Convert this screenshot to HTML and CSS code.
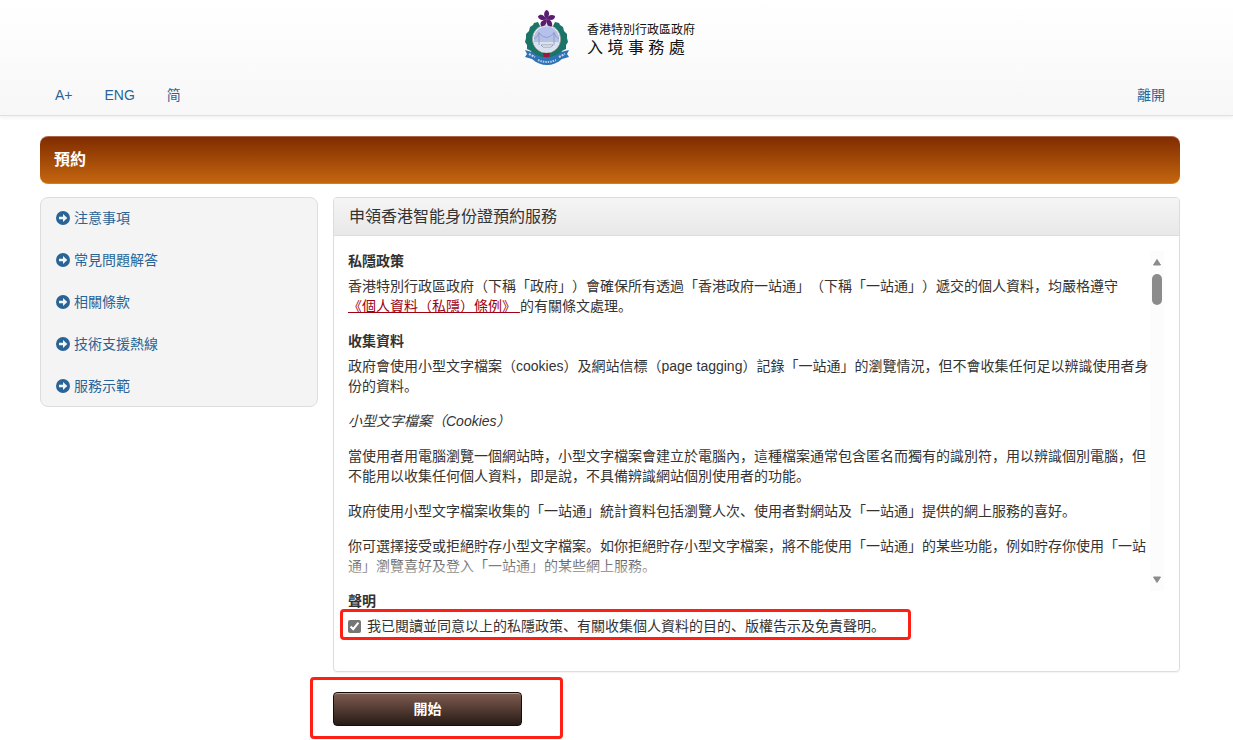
FILE: index.html
```html
<!DOCTYPE html>
<html lang="zh-HK">
<head>
  <meta charset="UTF-8">
  <title>預約 - 入境事務處</title>
  <meta name="viewport" content="width=device-width, initial-scale=1.0">
  <link rel="stylesheet" href="styles.css">
</head>
<body>
  <!-- shapes used more than once -->
  <svg width="0" height="0" class="sprite" aria-hidden="true">
    <symbol id="arrow" viewBox="0 0 14 14">
      <circle cx="7" cy="7" r="7" fill="#2a6496"/>
      <path d="M3 5.7h4V3l4.3 4L7 11V8.3H3z" fill="#f4f4f4"/>
    </symbol>
    <path id="petal" d="M0 0C-3-2-4-6-1-9 3-8 3-4 0 0z"/>
    <path id="leaves" d="M13 12l-4 1-1 2-3 2-1 4-3 3 0 4-1 4 2 3 0 4 4 2 2 4 5 1 4 2 4-1V42C13 42 8.500 36 8.500 29c0-6 3-10 7-12z"/>
  </svg>

  <header class="header">
    <div class="container">
      <div class="logo">
        <svg class="emblem" viewBox="0 0 45 56" aria-hidden="true">
          <!-- wreath -->
          <g fill="#1a7468">
            <use href="#leaves"/>
            <use href="#leaves" transform="matrix(-1 0 0 1 43 0)"/>
          </g>
          <!-- harbour -->
          <circle cx="21.500" cy="29" r="14" fill="#fff" stroke="#a99c8c" stroke-width=".8"/>
          <circle cx="21.500" cy="29" r="12.800" fill="#b5c1ec"/>
          <path d="M8.800 30h25.400c0 6-5 11.800-12.700 11.800S8.800 36 8.800 30z" fill="#d8e2f3"/>
          <path d="M9 31h25M14 22v13M29 22v13M9 29q3-1 5-6 7.500 9 15 0 2 5 5 6" stroke="#8a95b8" stroke-width=".8" fill="none"/>
          <path d="M16 35h12l-2 2h-8z" fill="#fff" stroke="#64748d" stroke-width=".6"/>
          <!-- bauhinia -->
          <g fill="#5a1d70" transform="translate(21.500 9)">
            <use href="#petal" transform="rotate(5)"/>
            <use href="#petal" transform="rotate(77)"/>
            <use href="#petal" transform="rotate(149)"/>
            <use href="#petal" transform="rotate(221)"/>
            <use href="#petal" transform="rotate(293)"/>
          </g>
          <!-- ribbon -->
          <path d="M18 43h7l-1 5h-5z" fill="#9b174a"/>
          <path d="M0 40l7 2c8 7 21 7 29 0l8-2-2 4 2 3-7 2c-9 8-21 8-30 0l-7-2 2-3z" fill="#2f72b5"/>
          <path d="M4 44l6 3M34 47l6-3" stroke="#c4d8ed" stroke-width="2" stroke-dasharray="2 1" fill="none"/>
          <path d="M13 50q9 4 18 0" stroke="#b5cee8" stroke-width="2" stroke-dasharray="1.500 1" fill="none"/>
        </svg>
        <div class="logo-text">
          <span class="logo-gov">香港特別行政區政府</span>
          <span class="logo-dept">入 境 事 務 處</span>
        </div>
      </div>
      <nav class="topnav">
        <a href="#">A+</a>
        <a href="#">ENG</a>
        <a href="#">简</a>
        <a href="#" class="leave">離開</a>
      </nav>
    </div>
  </header>

  <main class="container">
    <h1 class="banner">預約</h1>

    <div class="columns">
      <ul class="sidebar">
        <li><a href="#"><svg class="icon"><use href="#arrow"/></svg>注意事項</a></li>
        <li><a href="#"><svg class="icon"><use href="#arrow"/></svg>常見問題解答</a></li>
        <li><a href="#"><svg class="icon"><use href="#arrow"/></svg>相關條款</a></li>
        <li><a href="#"><svg class="icon"><use href="#arrow"/></svg>技術支援熱線</a></li>
        <li><a href="#"><svg class="icon"><use href="#arrow"/></svg>服務示範</a></li>
      </ul>

      <div class="content">
        <section class="panel">
          <h2 class="panel-heading">申領香港智能身份證預約服務</h2>
          <div class="panel-body">
            <div class="terms">
              <div class="terms-text">
                <h3>私隱政策</h3>
                <p>香港特別行政區政府（下稱「政府」）會確保所有透過「香港政府一站通」（下稱「一站通」）遞交的個人資料，均嚴格遵守 <a href="#" class="law">《個人資料（私隱）條例》 </a>的有關條文處理。</p>
                <h3>收集資料</h3>
                <p>政府會使用小型文字檔案（cookies）及網站信標（page tagging）記錄「一站通」的瀏覽情況，但不會收集任何足以辨識使用者身份的資料。</p>
                <p><em>小型文字檔案（Cookies）</em></p>
                <p>當使用者用電腦瀏覽一個網站時，小型文字檔案會建立於電腦內，這種檔案通常包含匿名而獨有的識別符，用以辨識個別電腦，但不能用以收集任何個人資料，即是說，不具備辨識網站個別使用者的功能。</p>
                <p>政府使用小型文字檔案收集的「一站通」統計資料包括瀏覽人次、使用者對網站及「一站通」提供的網上服務的喜好。</p>
                <p>你可選擇接受或拒絕貯存小型文字檔案。如你拒絕貯存小型文字檔案，將不能使用「一站通」的某些功能，例如貯存你使用「一站通」瀏覽喜好及登入「一站通」的某些網上服務。</p>
              </div>
              <div class="scrollbar" aria-hidden="true">
                <svg width="10" height="8"><path d="M5 1.500L8.500 7h-7z"/></svg>
                <span class="thumb"></span>
                <svg width="10" height="8"><path d="M5 6.500L8.500 1h-7z"/></svg>
              </div>
            </div>
            <h3>聲明</h3>
            <div class="agree">
              <input type="checkbox" id="agree" checked>
              <label for="agree">我已閱讀並同意以上的私隱政策、有關收集個人資料的目的、版權告示及免責聲明。</label>
            </div>
          </div>
        </section>

        <div class="action">
          <button type="button" class="start">開始</button>
        </div>
      </div>
    </div>
  </main>
</body>
</html>
```
FILE: styles.css
```css
:root {
  --text: #333;
  --link: #2a6496;
  --border: #ddd;
  --mark: #ff2015;
}

* {
  box-sizing: border-box;
}

body {
  margin: 0;
  background: #fff;
  color: var(--text);
  font-family: "Liberation Sans", "Noto Sans CJK SC", sans-serif;
  font-size: 14px;
  line-height: 20px;
  font-feature-settings: "locl" 0;
  text-spacing-trim: space-all;
}

a {
  color: var(--link);
  text-decoration: none;
}

h1, h2, h3, p, ul {
  margin: 0;
  padding: 0;
}

.sprite {
  position: absolute;
}

.header, main {
  padding-right: 13px;
}

.container {
  max-width: 1140px;
  margin: 0 auto;
}

main.container {
  max-width: 1153px;
  padding-bottom: 14px;
}

/* header */
.header {
  background: linear-gradient(#fff, #f7f7f7);
  border-bottom: 1px solid #e0e0e0;
  box-shadow: 0 1px 5px rgba(0, 0, 0, 0.08);
}

.logo {
  display: flex;
  justify-content: center;
  gap: 17px;
  padding-top: 10px;
}

.emblem {
  width: 45px;
  height: 56px;
}

.logo-text {
  display: flex;
  flex-direction: column;
  padding-top: 12px;
  color: #111;
}

.logo-gov {
  font-size: 12px;
  line-height: 16px;
}

.logo-dept {
  font-size: 16px;
  line-height: 20px;
}

.topnav {
  display: flex;
  gap: 32px;
  padding: 19px 15px 10px;
}

.leave {
  margin-left: auto;
}

/* title bar */
.banner {
  margin: 20px 0 13px;
  padding: 13px 14px;
  border-top: 1px solid #a9664a;
  border-bottom: 1px solid #d98200;
  border-radius: 8px;
  background: linear-gradient(#802c00, #c4660f);
  color: #fff;
  font-size: 16px;
  line-height: 20px;
}

.columns {
  display: grid;
  grid-template-columns: 278px 1fr;
  gap: 15px;
  align-items: start;
}

/* side menu */
.sidebar {
  display: flex;
  flex-direction: column;
  gap: 22px;
  padding: 10px 15px;
  border: 1px solid var(--border);
  border-radius: 8px;
  background: #f4f4f4;
  list-style: none;
}

.sidebar a {
  display: flex;
  align-items: center;
  gap: 4px;
}

.icon {
  width: 14px;
  height: 14px;
}

/* panel */
.panel {
  border: 1px solid var(--border);
  border-radius: 4px;
  box-shadow: 0 1px 1px rgba(0, 0, 0, 0.05);
}

.panel-heading {
  padding: 9px 15px 8px;
  border-bottom: 1px solid var(--border);
  border-radius: 3px 3px 0 0;
  background: linear-gradient(#f5f5f5, #e8e8e8);
  font-size: 16px;
  font-weight: normal;
}

.panel-body {
  padding: 15px 15px 35px 14px;
}

.panel-body h3 {
  margin-bottom: 5px;
  font-size: 14px;
}

.terms {
  position: relative;
  display: flex;
}

.terms-text {
  flex: 1;
}

.terms-text p {
  margin-bottom: 15px;
}

.terms::after {
  content: "";
  position: absolute;
  left: 0;
  right: 14px;
  bottom: 0;
  height: 40px;
  background: linear-gradient(rgba(255, 255, 255, 0), #fff);
}

.law {
  color: #a00010;
  text-decoration: underline;
  white-space: nowrap;
}

.scrollbar {
  display: flex;
  flex-direction: column;
  align-items: center;
  width: 14px;
  padding: 7px 0;
  background: #fcfcfc;
}

.scrollbar path {
  fill: #8b8b8b;
  stroke: #8b8b8b;
  stroke-linejoin: round;
}

.thumb {
  width: 10px;
  height: 31px;
  margin: 8px 0 auto;
  border-radius: 5px;
  background: #8b8b8b;
}

.agree {
  position: relative;
  display: flex;
  align-items: center;
  gap: 6px;
  width: fit-content;
}

.agree input {
  width: 13px;
  height: 13px;
  margin: 0;
  accent-color: #767676;
}

/* red frames around the parts to click */
.agree::after,
.action::after {
  content: "";
  position: absolute;
  border: 3px solid var(--mark);
  border-radius: 4px;
  pointer-events: none;
}

.agree::after {
  inset: -7px -26px -4px -8px;
}

.action {
  position: relative;
  width: 189px;
  margin-top: 20px;
}

.action::after {
  inset: -15px -41px -13px -23px;
}

.start {
  display: block;
  width: 100%;
  height: 34px;
  border: 1px solid #140d0a;
  border-radius: 4px;
  background: linear-gradient(#805c50, #261b16);
  box-shadow: inset 0 1px 0 rgba(255, 255, 255, 0.4);
  color: #fff;
  font: inherit;
  font-weight: bold;
  cursor: pointer;
}
```
